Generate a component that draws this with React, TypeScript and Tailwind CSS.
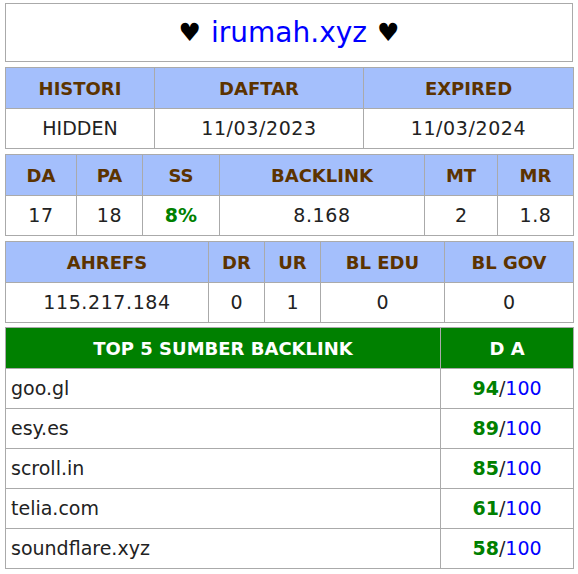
import React from "react";

const border = "border border-[#aaaaaa]";
const th = `${border} bg-[#a4bffc] text-[#5c3300] font-bold text-[18px] h-[41px] text-center`;
const td = `${border} bg-white text-[#222] text-[19px] h-[40px] text-center`;

function InfoTable({
  cols,
  heads,
  cells,
}: {
  cols: number[];
  heads: string[];
  cells: React.ReactNode[];
}) {
  return (
    <table className="w-[568px] table-fixed border-collapse mt-[5px]">
      <colgroup>
        {cols.map((w, i) => (
          <col key={i} style={{ width: w }} />
        ))}
      </colgroup>
      <thead>
        <tr>
          {heads.map((h) => (
            <th key={h} className={th}>
              {h}
            </th>
          ))}
        </tr>
      </thead>
      <tbody>
        <tr>
          {cells.map((c, i) => (
            <td key={i} className={td}>
              {c}
            </td>
          ))}
        </tr>
      </tbody>
    </table>
  );
}

const num = (v: string) => <span className="tracking-[0.6px]">{v}</span>;

const sources = [
  { domain: "goo.gl", da: 94 },
  { domain: "esy.es", da: 89 },
  { domain: "scroll.in", da: 85 },
  { domain: "telia.com", da: 61 },
  { domain: "soundflare.xyz", da: 58 },
];

export default function App() {
  return (
    <div className="w-[578px] h-[574px] bg-white pl-[5px] pt-[3px] font-['DejaVu_Sans',sans-serif]">
      <div className={`${border} w-[568px] h-[59px] flex items-center justify-center text-[28px]`}>
        <span className="text-black text-[25px]">♥</span>
        <span className="text-[#0000ff] mx-[10px]">irumah.xyz</span>
        <span className="text-black text-[25px]">♥</span>
      </div>

      <div className="mt-[1px]">
        <InfoTable
          cols={[149, 209, 210]}
          heads={["HISTORI", "DAFTAR", "EXPIRED"]}
          cells={["HIDDEN", num("11/03/2023"), num("11/03/2024")]}
        />
      </div>

      <InfoTable
        cols={[71, 66, 77, 205, 73, 76]}
        heads={["DA", "PA", "SS", "BACKLINK", "MT", "MR"]}
        cells={[
          num("17"),
          num("18"),
          <span className="text-[#008000] font-bold">8%</span>,
          num("8.168"),
          "2",
          num("1.8"),
        ]}
      />

      <InfoTable
        cols={[203, 56, 56, 124, 129]}
        heads={["AHREFS", "DR", "UR", "BL EDU", "BL GOV"]}
        cells={[num("115.217.184"), "0", "1", "0", "0"]}
      />

      <table className="w-[568px] table-fixed border-collapse mt-[4px]">
        <colgroup>
          <col style={{ width: 435 }} />
          <col style={{ width: 133 }} />
        </colgroup>
        <thead>
          <tr>
            <th className={`${border} bg-[#008000] text-white font-bold text-[18px] h-[41px] text-center`}>
              TOP 5 SUMBER BACKLINK
            </th>
            <th className={`${border} bg-[#008000] text-white font-bold text-[18px] h-[41px] text-center`}>
              D A
            </th>
          </tr>
        </thead>
        <tbody>
          {sources.map((s) => (
            <tr key={s.domain}>
              <td className={`${border} text-[#222] text-[19px] h-[40px] text-left pl-[5px]`}>{s.domain}</td>
              <td className={`${border} text-[19px] h-[40px] text-center`}>
                <span className="text-[#008000] font-bold">{s.da}</span>
                <span className="text-[#222]">/</span>
                <span className="text-[#0000ff]">100</span>
              </td>
            </tr>
          ))}
        </tbody>
      </table>
    </div>
  );
}
